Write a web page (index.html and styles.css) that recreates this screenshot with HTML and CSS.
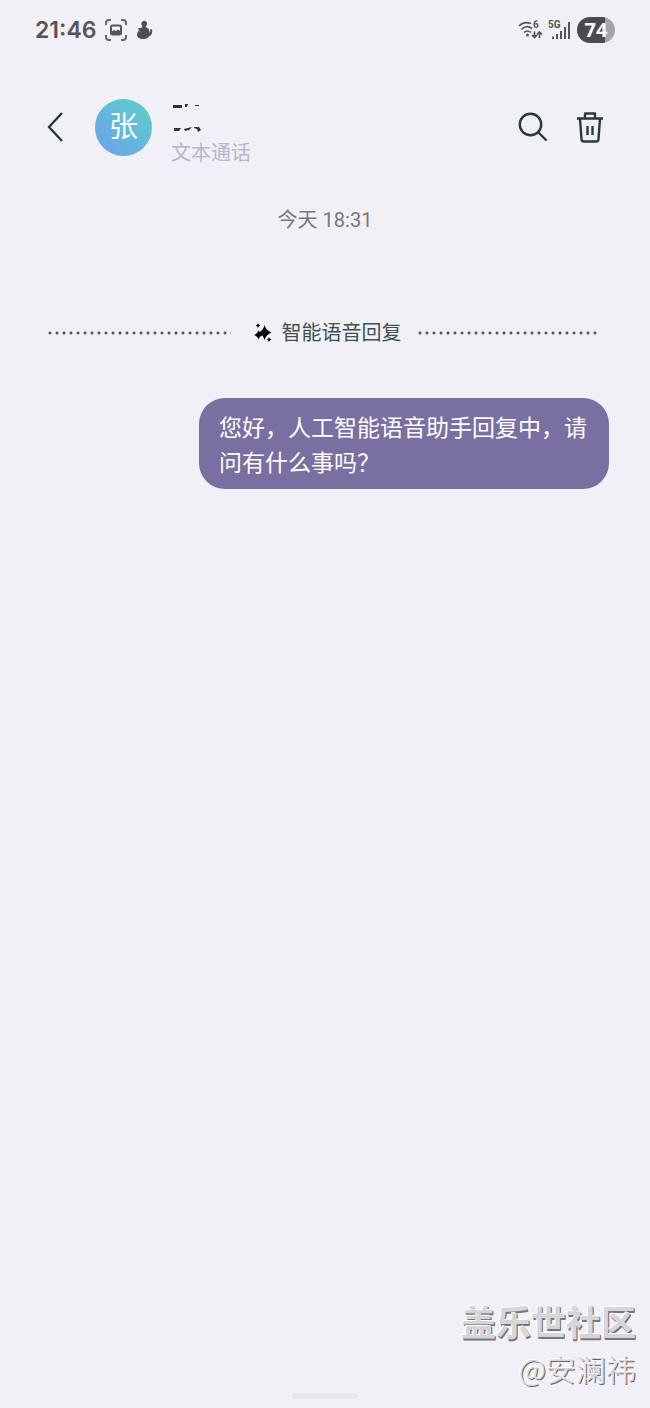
FILE: index.html
```
<!DOCTYPE html>
<html lang="zh-CN">
<head>
    <meta charset="UTF-8">
    <meta name="viewport" content="width=device-width, initial-scale=1.0">
    <title>文本通话</title>
    <link rel="stylesheet" href="styles.css">
</head>
<body>
    <div class="status-bar">
        <span class="clock">21:46</span>
        <svg class="capture" width="22" height="22" viewBox="0 0 22 22">
            <path d="M1 6V4a3 3 0 0 1 3-3h2M16 1h2a3 3 0 0 1 3 3v2M21 16v2a3 3 0 0 1-3 3h-2M6 21H4a3 3 0 0 1-3-3v-2" fill="none" stroke="#66666b" stroke-width="2"/>
            <rect x="6" y="6.500" width="10" height="9" rx="1.500" fill="none" stroke="#55555a" stroke-width="2"/>
            <path d="M6 15v-2l3-2 2 1 2-1.500 3 2v2.500z" fill="#55555a"/>
        </svg>
        <svg width="17" height="20" viewBox="0 0 17 20">
            <path d="M6.500 1.500C8 0 11 1 11 3.500c0 1.500-.500 2.500-1.500 3.500 3 1 4.500 3 4 6 .800-1 1-2 .700-3.500l1.800-.500c.800 4-.500 6.500-3 7.500-1.500 2-3.500 2.500-5.500 2.500C3.500 19 1 17.500 1 14.500c0-1.500 1-3 2-4.500L1.500 8.500 5 8c1-.500 1.500-1.500 1-2.500C5 4.500 5 3 6.500 1.500z" fill="#4d4d52"/>
            <path d="M3 10.500l2 1.500" fill="none" stroke="#85858a"/>
        </svg>
        <div class="signals">
            <svg width="26" height="22" viewBox="0 0 26 22">
                <g fill="none" stroke="#55555a" stroke-width="1.700">
                    <path d="M2 7C5.500 3.500 10 3 14 4.500M4.500 10.500c3-3 7-3.500 10.500-1M7 13.500c2-2 5-2 7 0"/>
                    <path d="M17.500 12.500v6M15 16l2.500 2.500L20 16M22.500 19v-6M20 15.500l2.500-2.500 2.500 2.500"/>
                </g>
                <circle cx="10.500" cy="16" r="1.500" fill="#55555a"/>
                <text x="16" y="9" class="tiny">6</text>
            </svg>
            <svg width="24" height="22" viewBox="0 0 24 22">
                <text x="1" y="9" class="tiny">5G</text>
                <path d="M6 17.500v2.500M10 15v5M14 12v8M18 8v12M22 3v17" stroke="#55555a" stroke-width="2"/>
            </svg>
            <span class="battery">74</span>
        </div>
    </div>

    <header class="chat-header">
        <button class="icon-btn back" aria-label="返回">
            <svg width="18" height="32" viewBox="0 0 18 32"><path d="M16 2L3 16l13 14" fill="none" stroke="#1f3432" stroke-width="2.200"/></svg>
        </button>
        <div class="avatar">张</div>
        <div class="contact">
            <svg width="72" height="36" viewBox="0 0 72 36" aria-hidden="true">
                <path d="M2 2h9v3H2zM14 1h3l-1 3h-2zM24 2h4v1h-4zM3 25h7l-2 3H3zM13 26l8-2-3 3-4 1zM23 24h5l2 3-3 2-1-3-3-1z" fill="#2b3436"/>
            </svg>
            <span class="subtitle">文本通话</span>
        </div>
        <div class="actions">
            <button class="icon-btn" aria-label="搜索">
                <svg width="30" height="30" viewBox="0 0 30 30"><g fill="none" stroke="#263b3a" stroke-width="2.400"><circle cx="12.500" cy="12.500" r="10.700"/><path d="M20 20l8.500 8.500"/></g></svg>
            </button>
            <button class="icon-btn" aria-label="删除">
                <svg width="28" height="32" viewBox="0 0 28 32"><g fill="none" stroke="#263b3a" stroke-width="2.400" stroke-linejoin="round"><path d="M1 7.500h26M9 7V2.500h10V7M4 8l1.500 20a2.500 2.500 0 0 0 2.500 2.500h12a2.500 2.500 0 0 0 2.500-2.500L24 8M11.500 15v9M16.500 15v9"/></g></svg>
            </button>
        </div>
    </header>

    <main class="messages">
        <time class="date">今天 18:31</time>
        <div class="divider">
            <span class="dots"></span>
            <svg width="18" height="20" viewBox="0 0 18 20">
                <path d="M10.500 2q1.500 5.500 7 7.500-5.500 2-7 7.500-1.200-5.500-6-7.500 4.800-2 6-7.500zM4.500 7q1 4 4.500 5-3.500 1-4.500 4.500Q3.500 13 0 12q3.500-1 4.500-5zM4 0q.500 2 2.200 2.500Q4.500 3 4 5q-.500-2-2.200-2.500Q3.500 2 4 0zM15 14q.500 2 2.500 2.500-2 .500-2.500 2.500-.500-2-2.200-2.500 1.700-.500 2.200-2.500z"/>
            </svg>
            <span class="divider-text">智能语音回复</span>
            <span class="dots"></span>
        </div>
        <p class="bubble">您好，人工智能语音助手回复中，请问有什么事吗？</p>
    </main>

    <footer class="watermark">
        <div class="community">盖乐世社区</div>
        <div class="author">@安澜祎</div>
        <div class="home-bar"></div>
    </footer>
</body>
</html>
```

FILE: styles.css
```
* { box-sizing: border-box; }
body {
    margin: 0;
    min-height: 100vh;
    display: flex;
    flex-direction: column;
    background-color: #f1f0f6;
    font-family: Roboto, "Noto Sans CJK SC", sans-serif;
    font-size: 20px;
    line-height: 28px;
}
svg { display: block; flex: none; }
.status-bar {
    display: flex;
    align-items: center;
    gap: 9px;
    height: 60px;
    padding: 0 35px;
    color: #55555a;
}
.clock {
    font-family: Inter, sans-serif;
    font-size: 23px;
    font-weight: 600;
}
.signals {
    display: flex;
    align-items: center;
    gap: 4px;
    margin-left: auto;
}
.tiny {
    font: bold 10px Roboto, sans-serif;
    fill: #55555a;
}
.battery {
    width: 38px;
    margin-left: 2px;
    border-radius: 13px;
    background: linear-gradient(90deg, #4a4a4f 74%, #a5a5aa 74%);
    color: #fff;
    font-family: "Open Sans", sans-serif;
    font-weight: 700;
    line-height: 26px;
    text-align: center;
}

.chat-header {
    display: flex;
    align-items: center;
    height: 74px;
    margin-top: 30px;
    padding: 0 46px;
}
.icon-btn {
    padding: 0;
    border: 0;
    background: none;
    cursor: pointer;
}
.avatar {
    width: 57px;
    height: 57px;
    margin: 0 19px 0 31px;
    border-radius: 50%;
    background: linear-gradient(45deg, #709eef, #62b9dc 50%, #62d1c0);
    color: #fff;
    font-size: 29px;
    line-height: 57px;
    text-align: center;
}
.contact { padding-top: 16px; }
.subtitle {
    display: block;
    color: #b9b4d0;
}
.actions {
    display: flex;
    align-items: center;
    gap: 28px;
    margin-left: auto;
}

.messages {
    display: flex;
    flex-direction: column;
    padding: 42px 41px 0 48px;
}
.date {
    align-self: center;
    margin-right: 7px;
    color: #77777b;
}
.divider {
    display: flex;
    align-items: center;
    margin: 85px 9px 0 0;
    color: #3c504f;
}
.dots {
    flex: 1;
    height: 4px;
    background: radial-gradient(circle at 2px 2px, #5c5c61 1px, transparent 2px) 0 0 / 7px 4px repeat-x;
}
.divider svg { margin: 0 10px 0 23px; }
.divider-text { margin-right: 16px; }
.bubble {
    align-self: flex-end;
    max-width: 410px;
    margin: 51px 0 0;
    padding: 11px 20px 10px;
    border-radius: 26px;
    background-color: #796fa1;
    color: #fff;
    font-family: "Noto Sans CJK SC", sans-serif;
    font-size: 23px;
    line-height: 35px;
}

.watermark {
    display: flex;
    flex-direction: column;
    align-items: flex-end;
    margin-top: auto;
    padding: 0 14px 9px;
    color: #d6d6da;
    font-family: "Noto Sans CJK SC", sans-serif;
}
.community {
    font-size: 35px;
    font-weight: 700;
    line-height: 48px;
    text-shadow: -1px -1px 0 #fff, 1px 1px 0 #77777b, 1px 2px 0 #77777b;
}
.author {
    padding-bottom: 2px;
    font-size: 30px;
    font-weight: 300;
    line-height: 46px;
    text-shadow: -1px -1px 0 #fff, 1px 1px 0 #66666a;
}
.home-bar {
    align-self: center;
    width: 66px;
    height: 6px;
    border-radius: 3px;
    background-color: #e8e7ed;
}
```
